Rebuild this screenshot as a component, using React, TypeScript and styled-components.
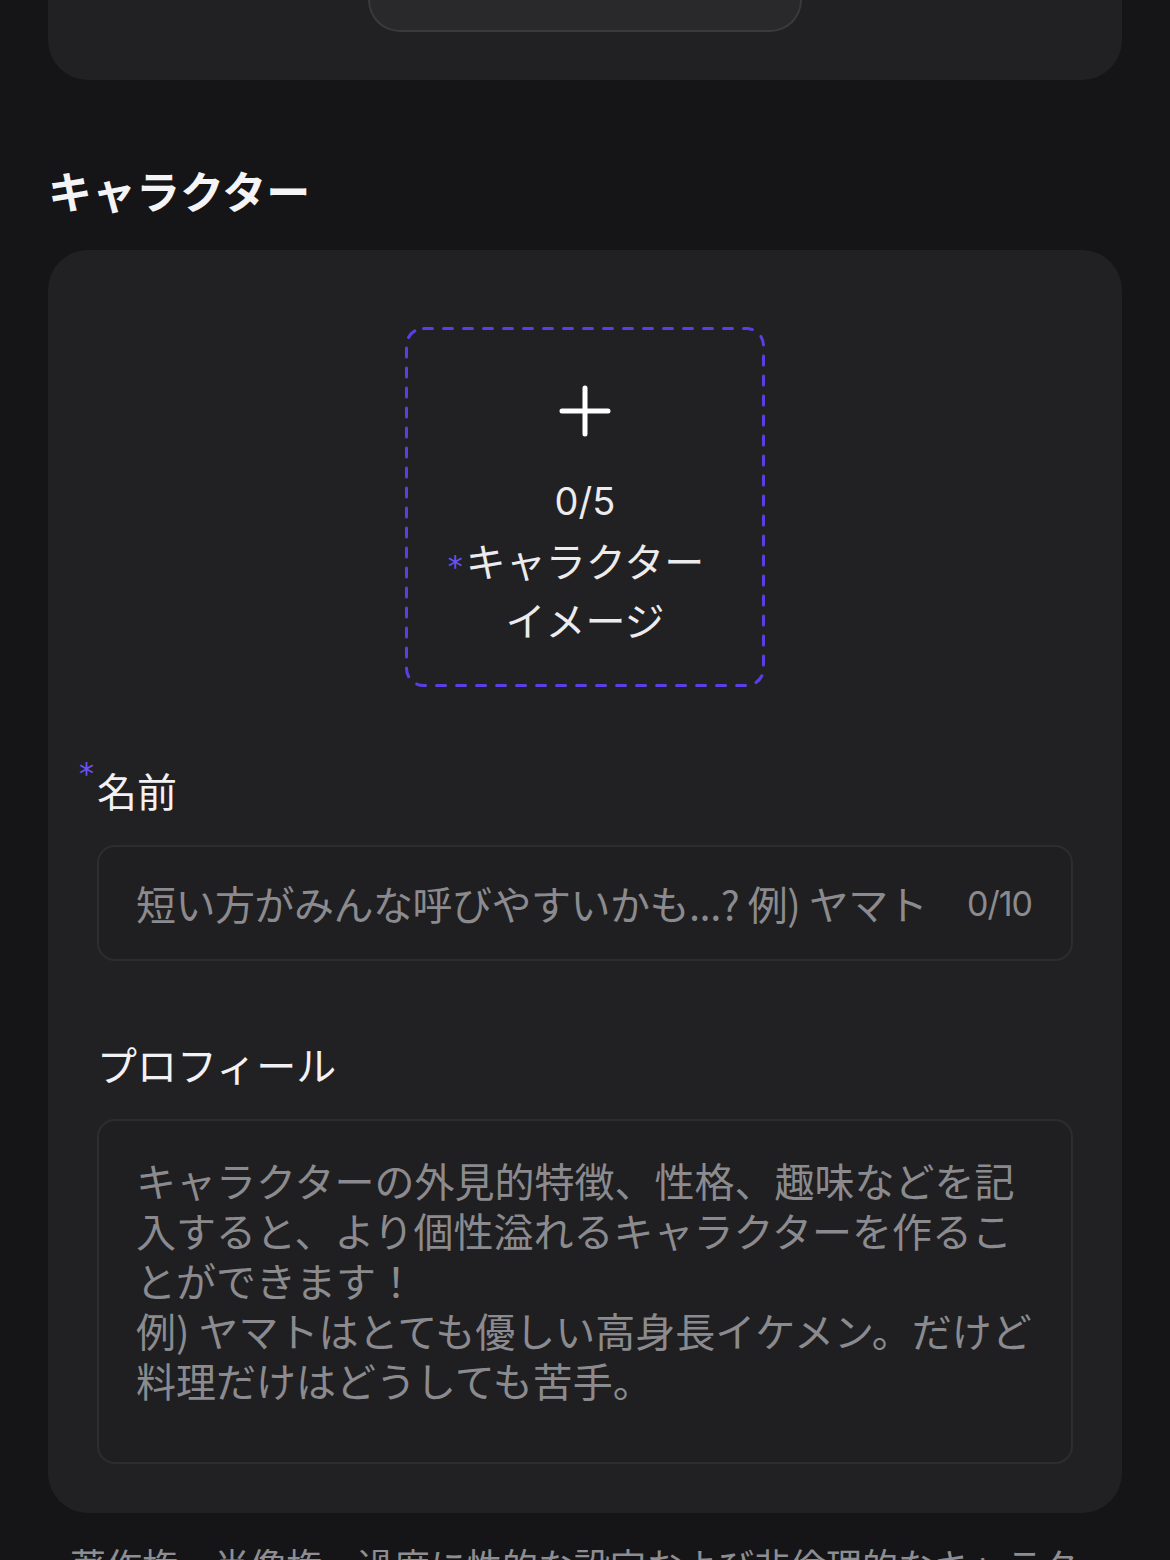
import React from 'react';
import styled, { createGlobalStyle } from 'styled-components';

const GlobalStyle = createGlobalStyle`
  html, body {
    margin: 0;
    padding: 0;
    background: #151517;
  }
  body {
    font-family: "Noto Sans CJK JP", "Noto Sans", sans-serif;
    color: #f2f2f4;
  }
`;

// dashed outline with longer dashes than css "dashed" gives
const dashedOutline = `url("data:image/svg+xml,%3csvg xmlns='http://www.w3.org/2000/svg' width='360' height='360'%3e%3crect x='1.5' y='1.5' width='357' height='357' rx='17' fill='none' stroke='%235B3EE4' stroke-width='3' stroke-dasharray='9 11' stroke-linecap='round'/%3e%3c/svg%3e")`;

const Page = styled.div`
  width: 1170px;
  box-sizing: border-box;
  padding: 0 48px;
  background: #151517;
  min-height: 1560px;
`;

const TopCard = styled.div`
  height: 80px;
  background: #212123;
  border-radius: 0 0 40px 40px;
  display: flex;
  justify-content: center;
`;

const TopButton = styled.div`
  width: 434px;
  height: 32px;
  box-sizing: border-box;
  background: #29292b;
  border: 2px solid #3a3a3d;
  border-top: none;
  border-radius: 0 0 48px 48px;
`;

const SectionTitle = styled.h2`
  margin: 80px 0 30px;
  font-size: 44px;
  line-height: 60px;
  font-weight: 700;
  color: #f4f4f6;
`;

const Card = styled.section`
  background: #212123;
  border-radius: 40px;
  padding: 77px 49px 49px;
  display: flex;
  flex-direction: column;
`;

const Uploader = styled.button`
  align-self: center;
  width: 360px;
  height: 360px;
  box-sizing: border-box;
  border: none;
  background: transparent ${dashedOutline} no-repeat;
  padding: 58px 0 0;
  display: flex;
  flex-direction: column;
  align-items: center;
  gap: 35px;
  cursor: pointer;
  font-family: inherit;
`;

const UploadCaption = styled.div`
  display: flex;
  flex-direction: column;
  align-items: center;
  font-size: 40px;
  line-height: 59px;
  color: #ececee;
`;

const Counter = styled.span`
  font-family: "Inter", "Noto Sans CJK JP", sans-serif;
  font-size: 38px;
`;

const RequiredWrap = styled.span`
  position: relative;
  display: inline-block;
`;

const Required = styled.span<{ $top: number }>`
  position: absolute;
  left: -18px;
  top: ${(p) => p.$top}px;
  font-family: "DejaVu Sans", sans-serif;
  font-size: 30px;
  line-height: 1;
  color: #6a52f0;
`;

const Field = styled.div`
  display: flex;
  flex-direction: column;
  margin-top: 75px;
`;

const Label = styled.label`
  font-size: 40px;
  line-height: 56px;
  color: #f2f2f4;
  margin-bottom: 27px;
`;

const InputBox = styled.div`
  height: 116px;
  box-sizing: border-box;
  border: 2px solid #2d2d30;
  border-radius: 18px;
  background: #1f1f21;
  padding: 0 39px 0 37px;
  display: flex;
  align-items: center;
  gap: 24px;
`;

const Input = styled.input`
  flex: 1;
  min-width: 0;
  border: none;
  outline: none;
  background: transparent;
  font-family: "Noto Sans CJK JP", sans-serif;
  font-size: 40px;
  letter-spacing: -0.5px;
  color: #f2f2f4;
  padding: 0;
  &::placeholder {
    color: #8b8b8f;
  }
`;

const Count = styled.span`
  font-family: "Inter", sans-serif;
  font-size: 34px;
  color: #8b8b8f;
  letter-spacing: -1px;
`;

const TextArea = styled.textarea`
  height: 345px;
  box-sizing: border-box;
  border: 2px solid #2d2d30;
  border-radius: 18px;
  background: #1f1f21;
  padding: 34px 37px;
  resize: none;
  outline: none;
  font-family: "Noto Sans CJK JP", sans-serif;
  font-size: 40px;
  line-height: 50px;
  color: #f2f2f4;
  &::placeholder {
    color: #8b8b8f;
  }
`;

const Notice = styled.p`
  margin: 24px 0 0;
  padding: 0 22px;
  font-size: 36px;
  line-height: 54px;
  color: #8e8e92;
`;

const PlusIcon = () => (
  <svg width="52" height="52" viewBox="0 0 52 52" fill="none">
    <path
      d="M26 3v46M3 26h46"
      stroke="#ffffff"
      strokeWidth="5"
      strokeLinecap="round"
    />
  </svg>
);

export default function App() {
  return (
    <>
      <GlobalStyle />
      <Page>
        <TopCard>
          <TopButton />
        </TopCard>

        <SectionTitle>キャラクター</SectionTitle>

        <Card>
          <Uploader type="button">
            <PlusIcon />
            <UploadCaption>
              <Counter>0/5</Counter>
              <RequiredWrap>
                <Required $top={21}>*</Required>
                キャラクター
              </RequiredWrap>
              <span>イメージ</span>
            </UploadCaption>
          </Uploader>

          <Field>
            <Label>
              <RequiredWrap>
                <Required $top={-3}>*</Required>
                名前
              </RequiredWrap>
            </Label>
            <InputBox>
              <Input placeholder="短い方がみんな呼びやすいかも...? 例) ヤマト" />
              <Count>0/10</Count>
            </InputBox>
          </Field>

          <Field>
            <Label>プロフィール</Label>
            <TextArea
              placeholder={
                'キャラクターの外見的特徴、性格、趣味などを記入すると、より個性溢れるキャラクターを作ることができます！\n例) ヤマトはとても優しい高身長イケメン。だけど料理だけはどうしても苦手。'
              }
            />
          </Field>
        </Card>

        <Notice>
          著作権、肖像権、過度に性的な設定および非倫理的なキャラクターは削除される場合があります。
        </Notice>
      </Page>
    </>
  );
}
